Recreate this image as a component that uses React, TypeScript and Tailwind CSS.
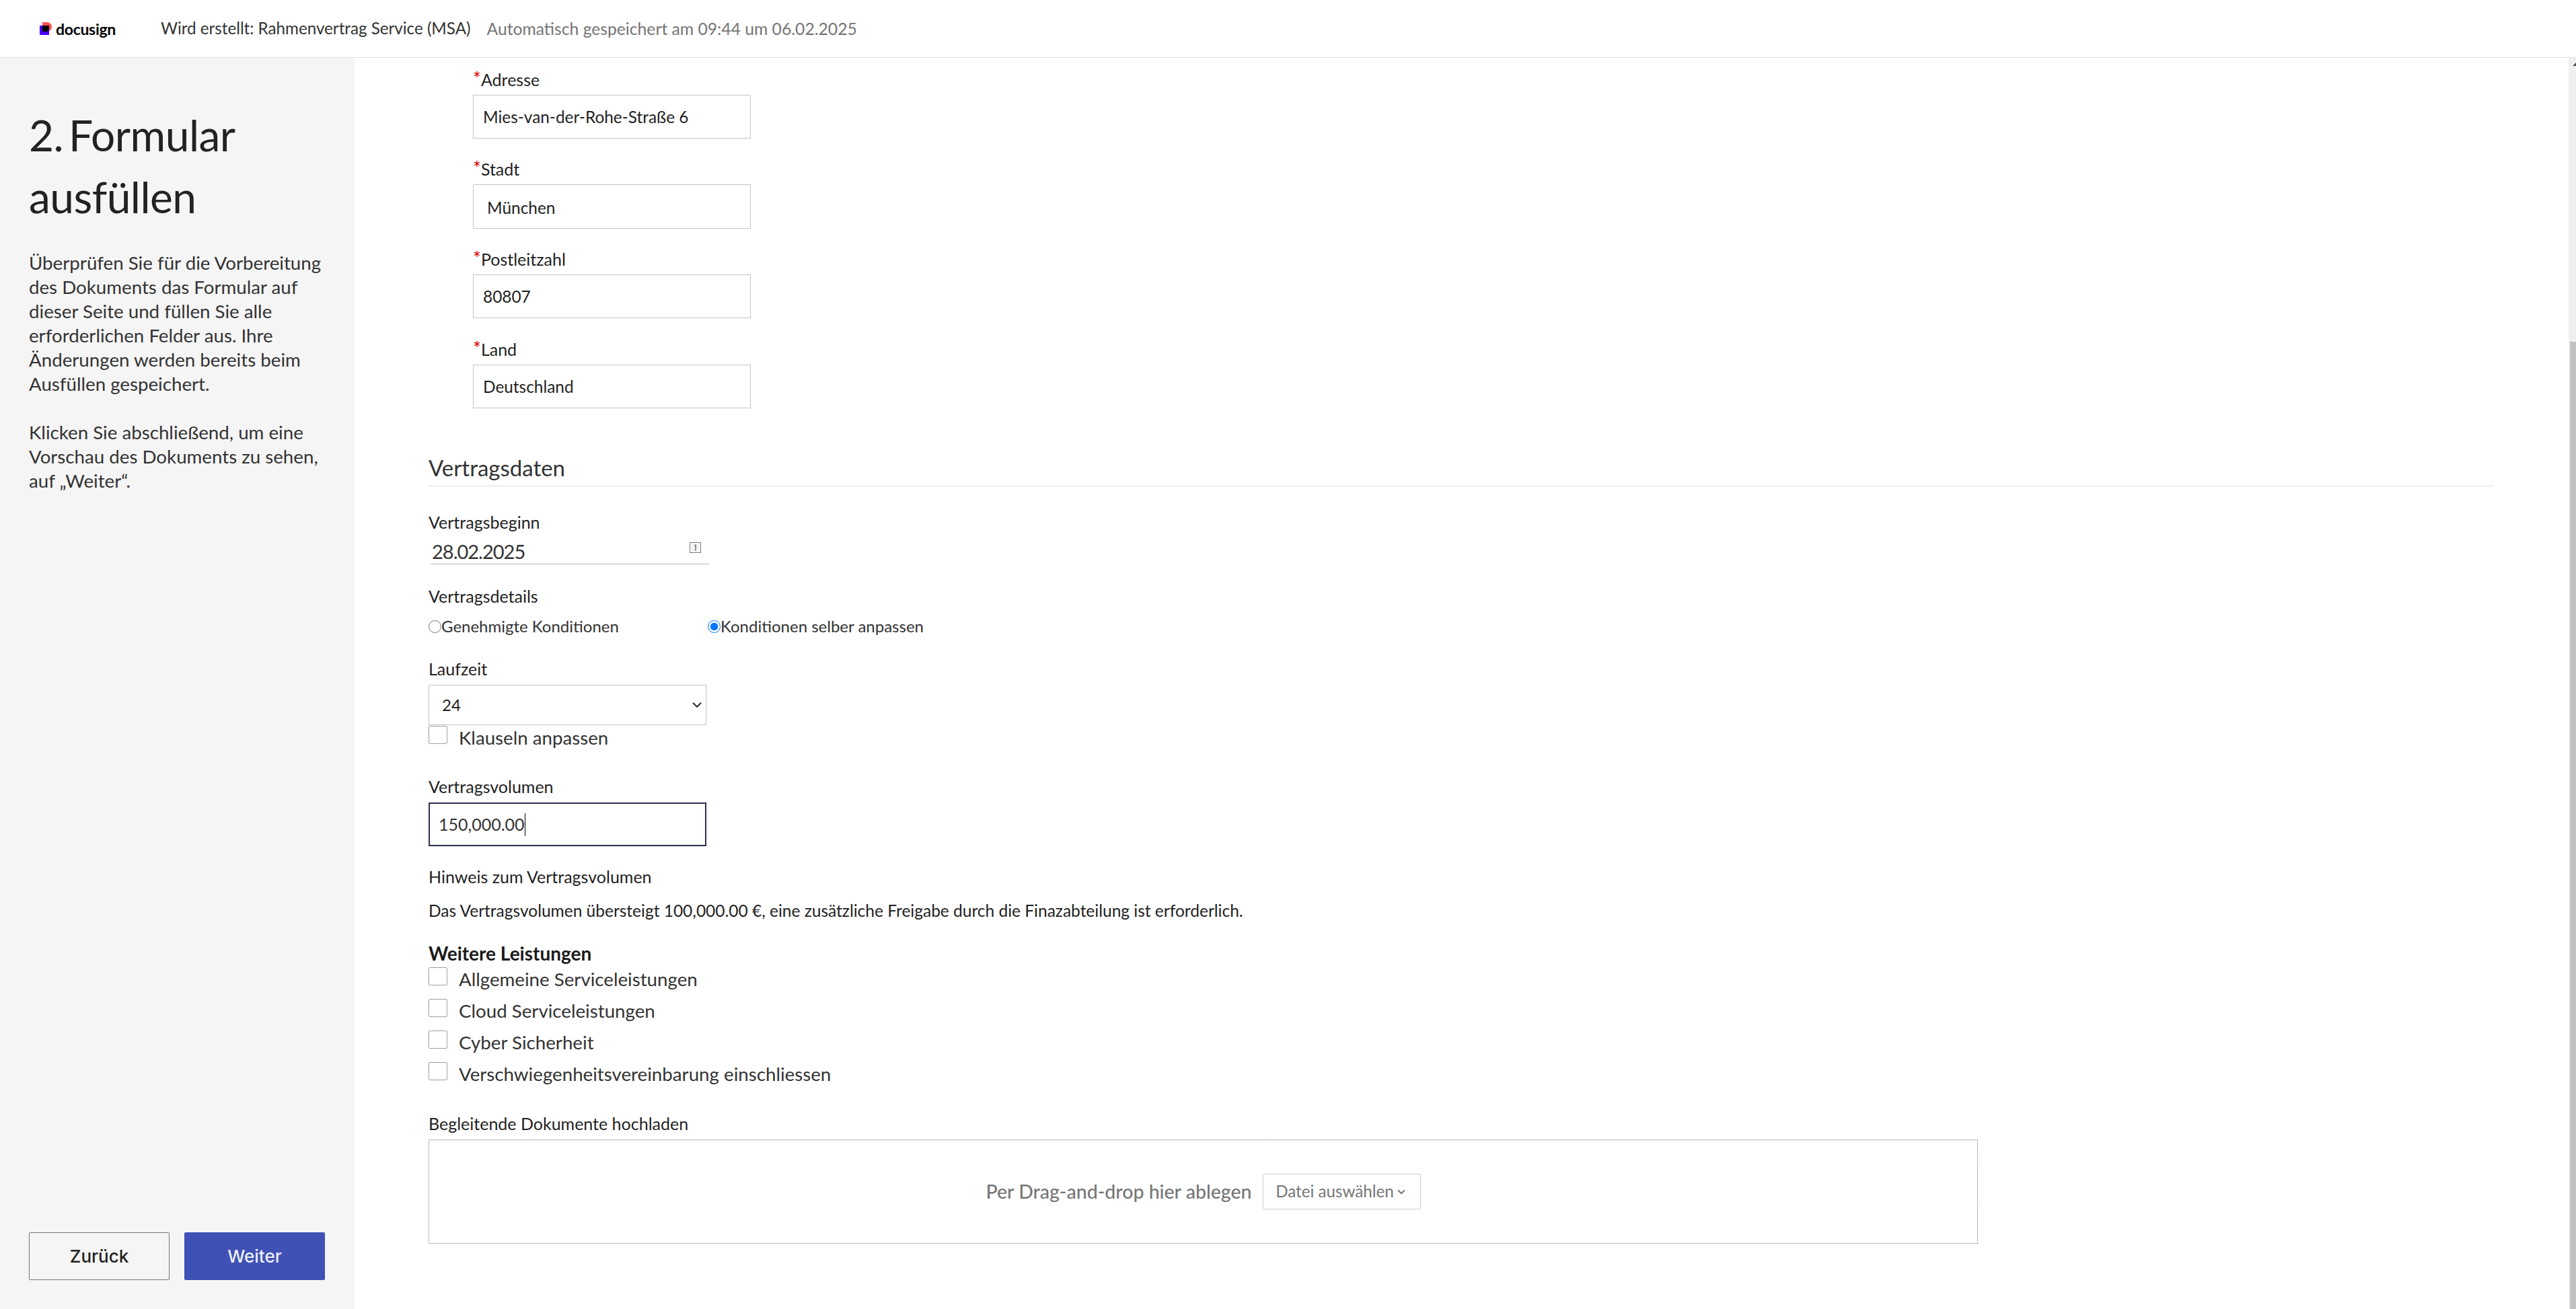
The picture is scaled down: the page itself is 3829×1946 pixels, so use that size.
import React from 'react';
import { ChevronDown } from 'lucide-react';

const addressFields = [
  { label: 'Adresse', value: 'Mies-van-der-Rohe-Straße 6', cls: 'mb-[29px]', inputCls: 'pl-[14px]' },
  { label: 'Stadt', value: 'München', cls: 'mb-[29px]', inputCls: 'pl-[20px] h-[66px] pt-[2px]' },
  { label: 'Postleitzahl', value: '80807', cls: 'mb-[30px]', inputCls: 'pl-[14px]' },
  { label: 'Land', value: 'Deutschland', cls: '', inputCls: 'pl-[14px]' },
];

const services = [
  'Allgemeine Serviceleistungen',
  'Cloud Serviceleistungen',
  'Cyber Sicherheit',
  'Verschwiegenheitsvereinbarung einschliessen',
];

const Logo = () => (
  <div className="flex items-center w-[115px]">
    <svg width="20" height="20" viewBox="0 0 20 20" className="mr-[4px]">
      <path d="M4 0h7a7 7 0 0 1 0 14H4z" fill="#ff5252" />
      <rect x="0" y="5" width="14" height="14" fill="#4c00ff" />
      <path d="M4 5h10v4a7 7 0 0 1-3 5H4z" fill="#000" />
    </svg>
    <span className="text-[23px] leading-[30px] font-bold tracking-[-0.3px] text-black">docusign</span>
  </div>
);

const Label = ({ children, cls = '' }: { children: React.ReactNode; cls?: string }) => (
  <div className={`h-[30px] text-[25px] leading-[30px] text-[#1f1f1f] ${cls}`}>{children}</div>
);

const Checkbox = ({ text }: { text: string }) => (
  <label className="flex items-start">
    <input type="checkbox" className="appearance-none w-[28px] h-[27px] bg-white border border-[#a0a0a0] rounded-[2px] shrink-0" />
    <span className="ml-[17px] mt-[3px] text-[27.7px] leading-[30px] text-[#333]">{text}</span>
  </label>
);

const App: React.FC = () => {
  return (
    <div className="h-screen flex flex-col bg-white overflow-hidden font-['Lato',sans-serif] text-[#1f1f1f]">
      <header className="h-[86px] shrink-0 flex items-center pl-[59px] border-b border-[#e0e0e0]">
        <Logo />
        <span className="ml-[65px] text-[24.2px] text-[#333]">Wird erstellt: Rahmenvertrag Service (MSA)</span>
        <span className="ml-[24px] text-[24.7px] text-[#757575]">Automatisch gespeichert am 09:44 um 06.02.2025</span>
      </header>

      <div className="flex-1 flex min-h-0">
        <aside className="w-[527px] shrink-0 bg-[#f5f5f5] flex flex-col justify-between pl-[43px] pr-[44px] pb-[43px]">
          <div>
            <h1 className="mt-[69px] text-[64px] leading-[92px] font-normal tracking-[-0.5px] [word-spacing:-8px] text-[#222]">2. Formular ausfüllen</h1>
            <p className="mt-[34px] text-[27.7px] leading-[36px] text-[#333]">
              Überprüfen Sie für die Vorbereitung des Dokuments das Formular auf dieser Seite und füllen Sie alle erforderlichen Felder aus. Ihre Änderungen werden bereits beim Ausfüllen gespeichert.
            </p>
            <p className="mt-[36px] text-[27.7px] leading-[36px] text-[#333]">
              Klicken Sie abschließend, um eine Vorschau des Dokuments zu sehen, auf „Weiter“.
            </p>
          </div>
          <div className="flex gap-[22px] font-['Inter',sans-serif] text-[26px] font-medium">
            <button className="w-[209px] h-[71px] border border-[#767676] rounded-[2px] text-[#222]">Zurück</button>
            <button className="w-[209px] h-[71px] bg-[#3f51b5] rounded-[2px] text-[#eef0fb]">Weiter</button>
          </div>
        </aside>

        <main className="flex-1 min-w-0 pl-[110px] pr-[111px] overflow-hidden">
          <section className="pl-[66px] pt-[16px]">
            {addressFields.map((f) => (
              <div key={f.label} className={f.cls}>
                <Label><span className="text-[#e00000] text-[28px]">*</span>{f.label}</Label>
                <input
                  readOnly
                  value={f.value}
                  className={`mt-[9px] block w-[413px] h-[65px] border border-[#c4c4c4] text-[24.4px] text-[#1f1f1f] outline-none ${f.inputCls}`}
                />
              </div>
            ))}
          </section>

          <h2 className="mt-[69px] h-[47px] leading-[38px] text-[33px] text-[#333] border-b border-[#e0e0e0]">Vertragsdaten</h2>

          <Label cls="mt-[38px]">Vertragsbeginn</Label>
          <div className="ml-[3px] w-[414px] h-[48px] border-b border-[#b5b5b5] flex items-start justify-between pr-[12px]">
            <span className="mt-[11px] ml-[2px] text-[29px] tracking-[-1px] leading-[36px] text-[#333]">28.02.2025</span>
            <svg width="17" height="18" viewBox="0 0 17 18" className="mt-[13px]">
              <rect x="0.5" y="2.5" width="16" height="15" fill="none" stroke="#777" />
              <rect x="2" y="4" width="13" height="12" fill="#f3f3f3" />
              <path d="M7.5 7l1.5-1v9" fill="none" stroke="#555" strokeWidth="1.2" />
            </svg>
          </div>

          <Label cls="mt-[32px]">Vertragsdetails</Label>
          <div className="mt-[15px] h-[30px] flex items-center text-[24px] text-[#333]">
            <label className="w-[415px] flex items-center">
              <input type="radio" name="terms" className="m-0 w-[19px] h-[19px] shrink-0" />
              Genehmigte Konditionen
            </label>
            <label className="flex items-center">
              <input type="radio" name="terms" defaultChecked className="m-0 w-[19px] h-[19px] shrink-0" />
              Konditionen selber anpassen
            </label>
          </div>

          <Label cls="mt-[33px]">Laufzeit</Label>
          <div className="relative mt-[9px] w-[413px]">
            <select className="block w-full h-[60px] pl-[19px] appearance-none bg-white border border-[#c4c4c4] text-[24px] text-[#1f1f1f] outline-none" defaultValue="24">
              <option>12</option>
              <option>24</option>
              <option>36</option>
            </select>
            <ChevronDown size={22} strokeWidth={2} className="absolute right-[3px] top-[19px] text-[#222] pointer-events-none" />
          </div>
          <div className="mt-[1px]"><Checkbox text="Klauseln anpassen" /></div>

          <Label cls="mt-[42px]">Vertragsvolumen</Label>
          <div className="mt-[9px] w-[413px] h-[65px] border-2 border-[#2b3050] flex items-center pl-[13px] text-[25px] text-[#333]">
            150,000.00<span className="w-px h-[34px] bg-black" />
          </div>

          <Label cls="mt-[30px]">Hinweis zum Vertragsvolumen</Label>
          <p className="mt-[21px] text-[24.5px] leading-[30px] text-[#1f1f1f]">
            Das Vertragsvolumen übersteigt 100,000.00 €, eine zusätzliche Freigabe durch die Finazabteilung ist erforderlich.
          </p>

          <h3 className="mt-[33px] text-[28px] leading-[30px] font-bold text-[#1a1a1a]">Weitere Leistungen</h3>
          <div className="mt-[6px] flex flex-col gap-[20px]">
            {services.map((s) => (
              <div key={s} className="h-[27px]"><Checkbox text={s} /></div>
            ))}
          </div>

          <Label cls="mt-[49px]">Begleitende Dokumente hochladen</Label>
          <div className="mt-[9px] w-[2303px] h-[155px] border border-dotted border-[#777] flex items-center justify-center">
            <span className="text-[28.5px] font-medium text-[#767676]">Per Drag-and-drop hier ablegen</span>
            <button className="ml-[16px] w-[235px] h-[53px] border border-[#d0d0d0] rounded-[2px] flex items-center justify-center gap-[2px] text-[24.2px] text-[#767676]">
              Datei auswählen <ChevronDown size={18} strokeWidth={2.5} />
            </button>
          </div>
        </main>

        <div className="w-[11px] shrink-0 bg-[#f0f0f0] flex flex-col items-end">
          <div className="mt-[7px] w-0 h-0 border-l-[5px] border-r-[0px] border-b-[5px] border-l-transparent border-b-[#505050]" />
          <div className="mt-auto w-[9px] h-[1438px] bg-[#c1c1c1]" />
        </div>
      </div>
    </div>
  );
};

export default App;
